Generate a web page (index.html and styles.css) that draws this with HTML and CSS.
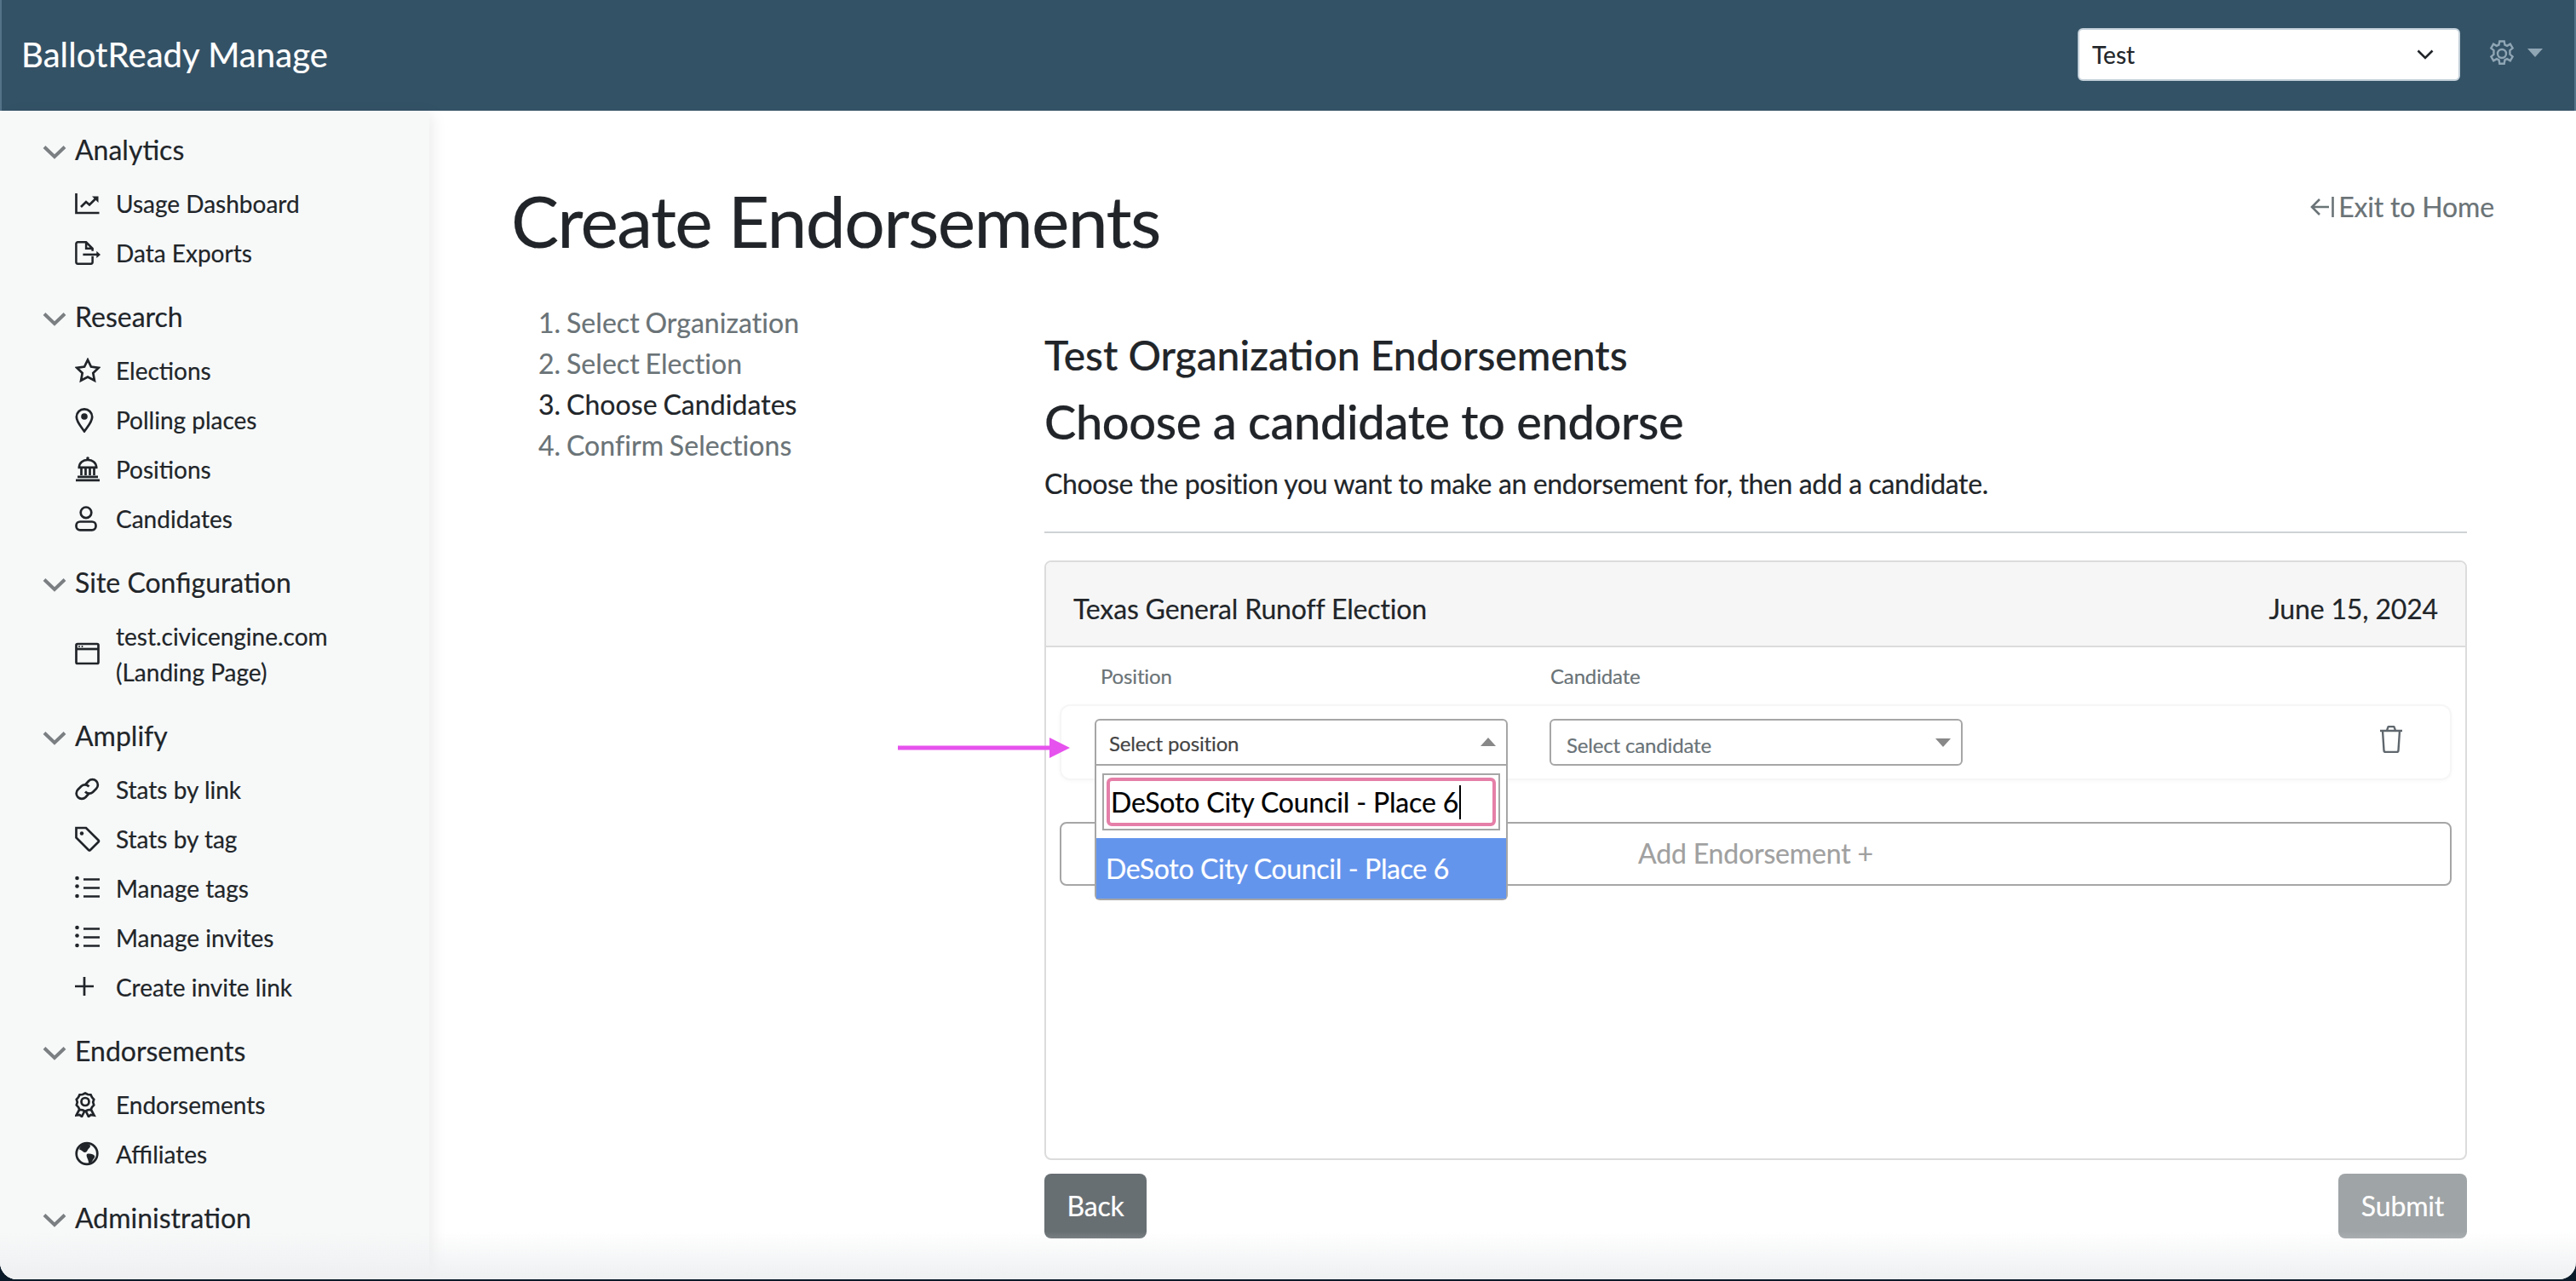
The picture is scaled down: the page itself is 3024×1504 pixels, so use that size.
FILE: index.html
```html
<!DOCTYPE html>
<html lang="en">
<head>
<meta charset="utf-8">
<title>BallotReady Manage</title>
<link rel="stylesheet" href="styles.css">
</head>
<body>
<div class="app">
  <header class="topbar">
    <div class="brand">BallotReady Manage</div>
    <div class="top-right">
      <div class="org-select"><span>Test</span>
        <svg class="org-chev" viewBox="0 0 20 12"><path d="M1.500 1.500 10 10l8.500-8.500"/></svg>
      </div>
      <div class="settings">
        <svg class="gear" viewBox="0 0 30 32"><path d="M12.300 1.500h5.400l.8 4.200 2.600 1.200 3.700-2.200 2.800 4.700-3.200 2.800v3l.1 1.600 3.100 2.800-2.800 4.700-3.700-2.200-2.600 1.200-.8 4.400h-5.400l-.8-4.400-2.600-1.200-3.700 2.200-2.800-4.700 3.100-2.800-.1-1.600.1-3-3.200-2.800 2.800-4.700 3.700 2.200 2.600-1.200z"/><circle cx="15" cy="16" r="5"/></svg>
        <span class="caret"></span>
      </div>
    </div>
  </header>
  <div class="layout">
    <aside class="sidebar">
      <section class="nav-group">
        <h2 class="nav-head"><svg class="chev" viewBox="0 0 28 17"><path d="M2 2.500 14 14 26 2.500"/></svg>Analytics</h2>
        <a class="nav-item"><span class="ico"><svg viewBox="0 0 30 30"><path class="s" d="M1.500 3v23h27"/><path class="s" d="M7 19l6-6 4 3.500 7-7"/><path class="f" d="M20 6.500h7.500V14z"/></svg></span>Usage Dashboard</a>
        <a class="nav-item"><span class="ico"><svg viewBox="0 0 32 30"><path class="s" d="M22 19v7.500a2 2 0 0 1-2 2H3.500a2 2 0 0 1-2-2v-23a2 2 0 0 1 2-2H14l8 8v3M14 1.500v8h8"/><path class="s" d="M10 17h19"/><path class="f" d="M27 12.500 32 17l-5 4.500z"/></svg></span>Data Exports</a>
      </section>
      <section class="nav-group">
        <h2 class="nav-head"><svg class="chev" viewBox="0 0 28 17"><path d="M2 2.500 14 14 26 2.500"/></svg>Research</h2>
        <a class="nav-item"><span class="ico"><svg viewBox="0 0 30 30"><path class="s" d="M15 2.500l3.900 8.100 8.900 1.200-6.500 6.200 1.600 8.800-7.900-4.300-7.900 4.300 1.600-8.800-6.500-6.200 8.900-1.200z"/></svg></span>Elections</a>
        <a class="nav-item"><span class="ico"><svg viewBox="0 0 30 30"><path class="s" d="M11 28.500C6 21.500 1.800 17 1.800 11.500a9.200 9.200 0 0 1 18.400 0C20.200 17 16 21.500 11 28.500z"/><circle class="f" cx="11" cy="11" r="3.800"/></svg></span>Polling places</a>
        <a class="nav-item"><span class="ico"><svg viewBox="0 0 30 30"><path class="s" d="M1 27.800h28M3 23.800h24M3.500 12.800h23M5 12.500C5 7 9.500 4 15 4s10 3 10 8.500"/><circle class="f" cx="15" cy="2" r="1.800"/><path class="s" d="M7.500 14v8M12.500 14v8M17.500 14v8M22.500 14v8" stroke-width="3.500"/></svg></span>Positions</a>
        <a class="nav-item"><span class="ico"><svg viewBox="0 0 30 30"><circle class="s" cx="13" cy="7.800" r="6.300"/><rect class="s" x="1.500" y="18.500" width="23" height="9.800" rx="4.500"/></svg></span>Candidates</a>
      </section>
      <section class="nav-group">
        <h2 class="nav-head"><svg class="chev" viewBox="0 0 28 17"><path d="M2 2.500 14 14 26 2.500"/></svg>Site Configuration</h2>
        <a class="nav-item"><span class="ico"><svg viewBox="0 0 30 30"><rect class="s" x="1.500" y="3" width="26" height="23" rx="1.500"/><path class="s" d="M2 9h25"/><circle class="f" cx="5" cy="6" r="1"/><circle class="f" cx="8.500" cy="6" r="1"/></svg></span><span>test.civicengine.com<br>(Landing Page)</span></a>
      </section>
      <section class="nav-group">
        <h2 class="nav-head"><svg class="chev" viewBox="0 0 28 17"><path d="M2 2.500 14 14 26 2.500"/></svg>Amplify</h2>
        <a class="nav-item"><span class="ico"><svg viewBox="0 0 30 30"><path class="s" d="M12 9.500l4-4.500a6.300 6.300 0 0 1 9 9l-4 4a6.300 6.300 0 0 1-9-.5"/><path class="s" d="M16.500 19.500l-4 4.500a6.300 6.300 0 0 1-9-9l4-4a6.300 6.300 0 0 1 9 .5"/></svg></span>Stats by link</a>
        <a class="nav-item"><span class="ico"><svg viewBox="0 0 30 30"><path class="s" d="M1.500 2h11.500l14.500 14.500a1.500 1.500 0 0 1 0 2L18 28a1.500 1.500 0 0 1-2 0L1.500 13.500z"/><circle class="f" cx="8" cy="8.500" r="2.200"/></svg></span>Stats by tag</a>
        <a class="nav-item"><span class="ico"><svg viewBox="0 0 30 30"><path class="s" d="M10 4.500h19M10 14.500h19M10 24.500h19"/><circle class="f" cx="2.500" cy="3" r="2.300"/><circle class="f" cx="2.500" cy="12.500" r="2.300"/><circle class="f" cx="2.500" cy="24" r="2.300"/></svg></span>Manage tags</a>
        <a class="nav-item"><span class="ico"><svg viewBox="0 0 30 30"><path class="s" d="M10 4.500h19M10 14.500h19M10 24.500h19"/><circle class="f" cx="2.500" cy="3" r="2.300"/><circle class="f" cx="2.500" cy="12.500" r="2.300"/><circle class="f" cx="2.500" cy="24" r="2.300"/></svg></span>Manage invites</a>
        <a class="nav-item"><span class="ico"><svg viewBox="0 0 30 30"><path class="s" d="M11 3v22M0 14h22" stroke-width="3"/></svg></span>Create invite link</a>
      </section>
      <section class="nav-group">
        <h2 class="nav-head"><svg class="chev" viewBox="0 0 28 17"><path d="M2 2.500 14 14 26 2.500"/></svg>Endorsements</h2>
        <a class="nav-item"><span class="ico"><svg viewBox="0 0 30 30"><path class="s" d="M12 1.500l3 1.500 3.500.3 1.500 3 2.200 2.500-1 3.300 1 3.300-2.200 2.500-1.500 3-3.500.3-3 1.500-3-1.500-3.500-.3-1.500-3-2.200-2.500 1-3.300-1-3.300 2.200-2.500 1.500-3 3.500-.3z"/><circle class="s" cx="12" cy="11.500" r="4.500"/><path class="s" d="M5 21l-3.500 6.500 4-.5 2.500 2 3-6M19 21l3.500 6.500-4-.5-2.500 2-3-6"/></svg></span>Endorsements</a>
        <a class="nav-item"><span class="ico"><svg viewBox="0 0 30 30"><circle class="s" cx="14" cy="14.500" r="12.300"/><path class="f" d="M11 2.500c4 0 7 1 7 3 0 2-2 2.500-3 4.500s-2 3.500-4 3-3-3-6-3.500C6 6 8 3 11 2.500zM14 15c3-1 8 0 9 2s-1 3-2 5-3 4-4 4-1-3-2-5-2-5-1-6z"/></svg></span>Affiliates</a>
      </section>
      <section class="nav-group">
        <h2 class="nav-head"><svg class="chev" viewBox="0 0 28 17"><path d="M2 2.500 14 14 26 2.500"/></svg>Administration</h2>
      </section>
    </aside>
    <main class="main">
      <div class="title-row">
        <h1 class="page-title">Create Endorsements</h1>
        <a class="exit"><svg class="exit-ico" viewBox="0 0 28 26"><path d="M26.500 1v24M22 13H3M11 4l-9 9 9 9"/></svg>Exit to Home</a>
      </div>
      <div class="wizard">
        <nav class="steps">
          <div class="step">1. Select Organization</div>
          <div class="step">2. Select Election</div>
          <div class="step current">3. Choose Candidates</div>
          <div class="step">4. Confirm Selections</div>
        </nav>
        <div class="panel">
          <h3 class="org-title">Test Organization Endorsements</h3>
          <h2 class="panel-title">Choose a candidate to endorse</h2>
          <p class="panel-sub">Choose the position you want to make an endorsement for, then add a candidate.</p>
          <hr class="rule">
          <div class="card">
            <div class="card-head"><span>Texas General Runoff Election</span><span>June 15, 2024</span></div>
            <div class="card-body">
              <div class="labels"><span class="label-pos">Position</span><span>Candidate</span></div>
              <div class="row">
                <svg class="arrow" viewBox="0 0 202 24"><path d="M0 9.500h178V0l24 12-24 12v-9.500H0z"/></svg>
                <div class="select-wrap">
                  <div class="select open"><span>Select position</span><i class="tri up"></i></div>
                  <div class="popup">
                    <div class="search-box"><div class="search"><span>DeSoto City Council - Place 6</span><i class="text-caret"></i></div></div>
                    <div class="option">DeSoto City Council - Place 6</div>
                  </div>
                </div>
                <div class="select muted"><span>Select candidate</span><i class="tri down"></i></div>
                <svg class="trash" viewBox="0 0 28 32"><path d="M1 6h26M4 6l1.500 23a2 2 0 0 0 2 2h13a2 2 0 0 0 2-2L24 6M9 6l1-3.500a2 2 0 0 1 2-1.500h4a2 2 0 0 1 2 1.500L19 6"/></svg>
              </div>
              <div class="add-btn">Add Endorsement +</div>
            </div>
          </div>
          <div class="actions">
            <a class="btn back">Back</a>
            <a class="btn submit">Submit</a>
          </div>
        </div>
      </div>
    </main>
  </div>
</div>
</body>
</html>
```

FILE: styles.css
```css
* { box-sizing: border-box; }
html, body { margin: 0; height: 100%; }
body {
  background: #0b1a28;
  font-family: Lato, "Open Sans", sans-serif;
  color: #212529;
  overflow: hidden;
  -webkit-text-stroke: .2px;
}
.app {
  position: relative;
  height: 1502px;
  background: #fff;
  border-radius: 0 0 20px 20px;
  overflow: hidden;
  display: flex;
  flex-direction: column;
}
.app::after {
  content: "";
  position: absolute;
  left: 0;
  right: 0;
  bottom: 0;
  height: 56px;
  background: linear-gradient(to bottom, rgba(236,238,240,0), rgba(236,238,240,.9));
  pointer-events: none;
}
.topbar {
  height: 130px;
  flex: none;
  background: #345266;
  border-left: 2px solid #557388;
  border-right: 2px solid #557388;
  display: flex;
  align-items: center;
  justify-content: space-between;
  padding: 0 37px 0 23px;
}
.brand { color: #fff; font-size: 40px; line-height: 48px; margin-top: -2px; letter-spacing: .1px; }
.top-right { display: flex; align-items: center; }
.org-select {
  width: 449px;
  height: 62px;
  margin-top: -2px;
  background: #fff;
  border: 2px solid #c3d0d9;
  border-radius: 6px;
  padding: 0 29px 0 15px;
  display: flex;
  align-items: center;
  justify-content: space-between;
  font-size: 28px;
  color: #212529;
}
.org-chev { width: 20px; height: 12px; fill: none; stroke: #212529; stroke-width: 2.6; }
.settings { display: flex; align-items: center; margin-left: 34px; }
.gear { width: 30px; height: 32px; fill: none; stroke: #8fa6b5; stroke-width: 2.4; margin-top: -4px; }
.caret {
  width: 0;
  height: 0;
  margin-left: 15px;
  margin-top: -6px;
  border-left: 9px solid transparent;
  border-right: 9px solid transparent;
  border-top: 10px solid #8fa6b5;
}
.layout { flex: 1; display: flex; min-height: 0; }
.sidebar {
  width: 504px;
  flex: none;
  background: #f7f9f9;
  box-shadow: 8px 0 16px -4px rgba(0,0,0,.08);
  padding: 22px 0 0 50px;
  position: relative;
}
.nav-group { margin-bottom: 22px; }
.nav-head {
  margin: 0 0 10px;
  height: 48px;
  display: flex;
  align-items: center;
  font-size: 32px;
  font-weight: 400;
  line-height: 48px;
  color: #212529;
}
.chev { width: 28px; height: 17px; margin: 5px 10px 0 0; fill: none; stroke: #7b7f82; stroke-width: 4; }
.nav-item {
  display: flex;
  align-items: center;
  padding: 8px 0 8px 38px;
  font-size: 28px;
  line-height: 42px;
  color: #212529;
}
.ico { width: 48px; flex: none; display: flex; }
.ico svg { width: 30px; height: 30px; }
.s { fill: none; stroke: #212529; stroke-width: 2.7; }
.f { fill: #212529; }
.main { flex: 1; padding: 80px 96px 0; min-width: 0; letter-spacing: -.01em; }
.title-row { display: flex; justify-content: space-between; align-items: flex-start; }
.page-title { margin: -2px 0 2px; font-size: 84px; font-weight: 400; line-height: 101px; color: #212529; letter-spacing: -.019em; }
.exit {
  display: flex;
  align-items: center;
  margin-top: 9px;
  font-size: 32px;
  line-height: 48px;
  color: #6a7377;
}
.exit-ico { width: 28px; height: 26px; margin-right: 5px; fill: none; stroke: #6a7377; stroke-width: 2.6; }
.wizard { display: flex; padding-right: 32px; padding-top: 44px; }
.steps { width: 626px; flex: none; padding-left: 32px; }
.step { font-size: 32px; line-height: 48px; color: #6a7377; letter-spacing: .002em; word-spacing: -1.500px; }
.step.current { color: #212529; }
.panel { flex: 1; min-width: 0; margin-top: 33px; }
.org-title { margin: 0 0 15px; font-size: 48px; font-weight: 500; line-height: 58px; color: #212529; letter-spacing: 0; }
.panel-title { margin: 0 0 16px; font-size: 56px; font-weight: 500; line-height: 67px; color: #212529; letter-spacing: -.007em; }
.panel-sub { margin: 0; font-size: 32px; line-height: 48px; color: #212529; letter-spacing: -.012em; }
.rule { margin: 32px 0; border: 0; border-top: 2px solid #cfd2d4; }
.card {
  height: 704px;
  border: 2px solid #dcdcdc;
  border-radius: 8px;
}
.card-head {
  height: 100px;
  background: #f6f6f6;
  border-bottom: 2px solid #dcdcdc;
  border-radius: 6px 6px 0 0;
  padding: 10px 32px 0;
  display: flex;
  align-items: center;
  justify-content: space-between;
  font-size: 32px;
}
.card-body { padding: 0 16px; }
.labels {
  display: flex;
  height: 67px;
  align-items: center;
  padding-left: 48px;
  font-size: 24px;
  color: #6a7377;
}
.label-pos { width: 528px; }
.row {
  position: relative;
  height: 89px;
  border: 2px solid #f6f6f6;
  border-radius: 12px;
  box-shadow: 0 1px 4px rgba(0,0,0,.03);
  padding: 15px 0 0 39px;
  display: flex;
  align-items: flex-start;
  gap: 49px;
}
.arrow { position: absolute; left: -192px; top: 37px; width: 202px; height: 24px; fill: #e652ee; }
.select-wrap { position: relative; width: 485px; flex: none; }
.select {
  width: 485px;
  height: 55px;
  flex: none;
  background: #fff;
  border: 2px solid #a6a6a6;
  border-radius: 6px;
  padding: 2px 12px 0 15px;
  display: flex;
  align-items: center;
  justify-content: space-between;
  font-size: 24px;
  color: #444;
}
.select.open { border-radius: 6px 6px 0 0; }
.select.muted { padding-left: 18px; padding-top: 5px; color: #6a7377; }
.tri { width: 0; height: 0; border-left: 9px solid transparent; border-right: 9px solid transparent; margin-top: -4px; }
.tri.up { border-bottom: 10px solid #888; }
.tri.down { border-top: 10px solid #888; }
.popup {
  position: absolute;
  left: 0;
  top: 55px;
  width: 485px;
  z-index: 2;
  background: #fff;
  border: 2px solid #a6a6a6;
  border-top: 0;
  border-radius: 0 0 6px 6px;
  padding-top: 9px;
}
.search-box { margin: 0 7px 9px; height: 67px; border: 2px solid #a6a6a6; padding: 3px; }
.search {
  height: 100%;
  border: 4px solid #e57fa8;
  border-radius: 6px;
  padding: 0 0 0 1px;
  display: flex;
  align-items: center;
  font-size: 32px;
  color: #000;
}
.text-caret { width: 2px; height: 40px; background: #000; margin-left: 1px; }
.option { height: 71px; background: #6495ed; color: #fff; font-size: 32px; line-height: 71px; padding-left: 11px; letter-spacing: -.0105em; }
.trash { position: absolute; left: 1547px; top: 23px; width: 28px; height: 32px; fill: none; stroke: #5f676d; stroke-width: 2.4; }
.add-btn {
  margin-top: 49px;
  height: 75px;
  border: 2px solid #a6a6a6;
  border-radius: 8px;
  text-align: center;
  font-size: 32px;
  line-height: 70px;
  color: #a0a0a0;
}
.actions { display: flex; justify-content: space-between; margin-top: 16px; }
.btn { height: 76px; border-radius: 8px; color: #fff; font-size: 32px; line-height: 76px; text-align: center; }
.back { width: 120px; background: #686f73; }
.submit { width: 151px; background: #9fa4a6; }
```
